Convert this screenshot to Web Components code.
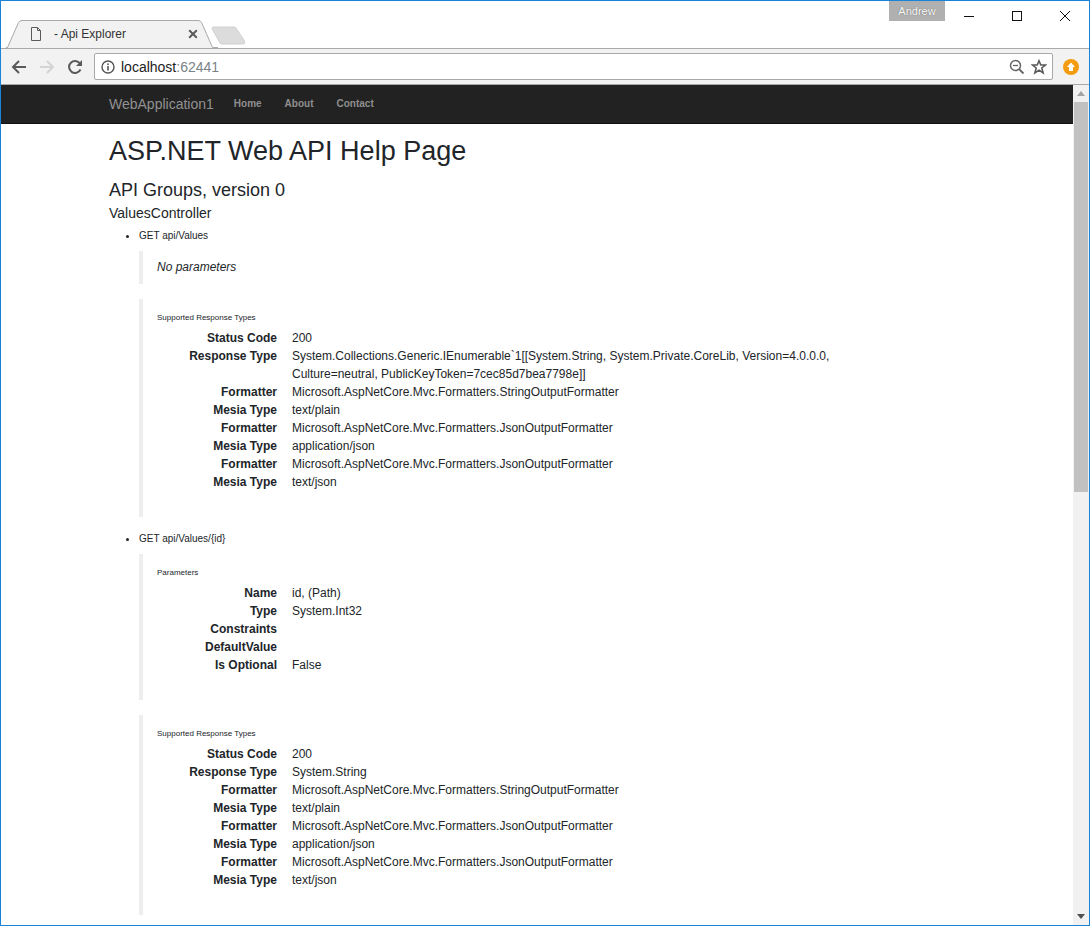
<!DOCTYPE html>
<html lang="en"><head><meta charset="utf-8"><title>Api Explorer</title>
<style>
html,body{margin:0;padding:0;background:#fff;font-family:"Liberation Sans",Arial,sans-serif;overflow:hidden}
</style></head><body>
<browser-window>
  <tab-strip slot="chrome"></tab-strip>
  <tool-bar slot="chrome"></tool-bar>
  <nav-bar slot="nav"></nav-bar>
  <help-page>
    <h-title>ASP.NET Web API Help Page</h-title>
    <group-title>API Groups, version 0</group-title>
    <controller-title>ValuesController</controller-title>
    <api-endpoint label="GET api/Values">
      <note-block compact><em>No parameters</em></note-block>
      <note-block heading="Supported Response Types" id="r1"></note-block>
    </api-endpoint>
    <api-endpoint label="GET api/Values/{id}">
      <note-block heading="Parameters" id="p2"></note-block>
      <note-block heading="Supported Response Types" id="r2"></note-block>
    </api-endpoint>
  </help-page>
  <scroll-bar slot="scroll"></scroll-bar>
</browser-window>
<script>
function def(name, css, html, init){
  customElements.define(name, class extends HTMLElement{
    constructor(){super();this.attachShadow({mode:'open'}).innerHTML='<style>'+css+'</style>'+html;}
    connectedCallback(){ if(init) init(this); }
  });
}
def('browser-window',`
:host{display:flex;flex-direction:column;box-sizing:border-box;width:1090px;height:926px;border:1px solid #1883d7;border-bottom-width:1px;overflow:hidden;background:#fff}
.body{display:flex;flex:1;min-height:0}
.main{flex:1;min-width:0;display:flex;flex-direction:column;overflow:hidden}
`,`<slot name="chrome"></slot><div class="body"><div class="main"><slot name="nav"></slot><slot></slot></div><slot name="scroll"></slot></div>`);

def('tab-strip',`
:host{display:flex;height:47px;background:#fff;position:relative;color:#222}
.tab{position:relative;margin-left:5px;width:207px;height:47px;flex:none;display:flex;align-items:center;box-sizing:border-box;padding:19px 0 0 24px}
.tab svg.shape{position:absolute;left:0;top:0}
.tab svg.doc,.tab span,.tab svg.x{position:relative}
.tab span{font-size:12px;margin-left:12px;width:124px;color:#333;white-space:pre}
.tab svg.x{margin-left:10px}
.new{margin:25px 0 0 -2px;flex:none}
.spacer{flex:1}
.user{width:56px;height:20px;background:#b0b0b0;color:#fff;font-size:11px;text-align:center;line-height:20px;flex:none;text-shadow:0 0 1px #555}
.ctl{display:flex;flex:none;width:144px;height:30px;margin-top:0;margin-right:0}
.ctl svg{width:48px;height:30px;display:block}
`,`<div class="tab">
<svg class="shape" width="212" height="47"><path d="M0 46.5H1.5L12.5 21.5Q13.5 19.5 16 19.5H192Q194.500 19.500 195.500 21.500L206.500 46.500H212V47H0Z" fill="#f2f2f2"/><path d="M-1 46.500H1.500L12.500 21.500Q13.500 19.500 16 19.500H192Q194.500 19.500 195.500 21.500L206.500 46.500H212" fill="none" stroke="#a9a9a9"/></svg>
<svg class="doc" width="12" height="14" viewBox="0 0 12 14"><path d="M1.500 .5H7.500L10.500 3.500V13.500H1.500ZM7.500 .5V3.500H10.500" fill="none" stroke="#5a5a5a"/></svg>
<span>- Api Explorer</span>
<svg class="x" width="10" height="10" viewBox="0 0 10 10"><path d="M1.200 1.200L8.800 8.800M8.800 1.200L1.200 8.800" stroke="#5a5a5a" stroke-width="2"/></svg>
</div>
<svg class="new" width="36" height="19" viewBox="0 0 36 19"><path d="M1 2.500Q1 1 2.500 1H23Q24.500 1 25 2L33.500 15Q34.500 18 32 18H11Q9.500 18 9 17Z" fill="#dcdcdc" stroke="#d0d0d0"/></svg>
<div class="spacer"></div>
<div class="user">Andrew</div>
<div class="ctl">
<svg viewBox="0 0 48 30"><path d="M19 15.500H29" stroke="#111"/></svg>
<svg viewBox="0 0 48 30"><rect x="19.500" y="10.500" width="9" height="9" fill="none" stroke="#111"/></svg>
<svg viewBox="0 0 48 30"><path d="M19 10L29 20M29 10L19 20" stroke="#111" fill="none"/></svg>
</div>`);

def('tool-bar',`
:host{display:flex;align-items:center;height:37px;box-sizing:border-box;background:#f2f2f2;border-bottom:1px solid #a8a8a8;border-top:1px solid #a9a9a9;padding:0}
.b{width:28px;height:28px;display:flex;align-items:center;justify-content:center;flex:none}
.first{margin-left:4px}
.omni{margin-left:5px;flex:none;width:959px;height:27px;box-sizing:border-box;background:#fff;border:1px solid #a9a9a9;border-radius:2px;display:flex;align-items:center;padding-left:6px}
.url{font-size:14px;margin-left:6px;color:#222;flex:1;white-space:pre}
.url i{font-style:normal;color:#7a8288}
.omni svg{flex:none}
.z{margin-right:6px}.s{margin-right:5px}
.ext{margin-left:10px;flex:none}
`,`<div class="b first"><svg width="16" height="16" viewBox="0 0 16 16"><path d="M15 8H2M8 2L2 8L8 14" fill="none" stroke="#5a5a5a" stroke-width="2"/></svg></div>
<div class="b"><svg width="16" height="16" viewBox="0 0 16 16"><path d="M1 8H14M8 2L14 8L8 14" fill="none" stroke="#d4d4d4" stroke-width="2"/></svg></div>
<div class="b"><svg width="16" height="16" viewBox="0 0 16 16"><path d="M13.500 10.500A6 6 0 1 1 13 4.500" fill="none" stroke="#5a5a5a" stroke-width="2"/><path d="M15 1V7H9Z" fill="#5a5a5a"/></svg></div>
<div class="omni">
<svg width="14" height="14" viewBox="0 0 14 14"><circle cx="7" cy="7" r="6" fill="none" stroke="#555" stroke-width="1.400"/><rect x="6.200" y="6" width="1.600" height="4.500" fill="#555"/><rect x="6.200" y="3.400" width="1.600" height="1.600" fill="#555"/></svg>
<div class="url">localhost<i>:62441</i></div>
<svg class="z" width="16" height="16" viewBox="0 0 16 16"><circle cx="6.500" cy="6.500" r="5" fill="none" stroke="#666" stroke-width="1.500"/><path d="M10 10L14.500 14.500" stroke="#666" stroke-width="1.800"/><path d="M4 6.500H9" stroke="#666" stroke-width="1.300"/></svg>
<svg class="s" width="16" height="16" viewBox="0 0 16 16"><path d="M8 1.800L9.800 6H14.500L10.800 9L12.100 13.800L8 11.100L3.900 13.800L5.200 9L1.500 6H6.200Z" fill="none" stroke="#5a5a5a" stroke-width="1.600"/></svg>
</div>
<svg class="ext" width="16" height="16" viewBox="0 0 16 16"><circle cx="8" cy="8" r="8" fill="#f39c12"/><path d="M8 3.500L12 8H10V12H6V8H4Z" fill="#fff"/></svg>`);

def('nav-bar',`
:host{display:flex;flex:none;align-items:center;height:39px;box-sizing:border-box;background:#222;border-bottom:1px solid #111;padding-left:108px;padding-bottom:1px}
.brand{font-size:14px;color:#919191;margin-right:20px}
a{font-size:10px;font-weight:bold;color:#8f8f8f;margin-right:23px;text-decoration:none}
`,`<span class="brand">WebApplication1</span><a>Home</a><a>About</a><a>Contact</a>`);

def('help-page',`
:host{display:block;padding:0 0 0 108px;color:#212529}
`,`<slot></slot>`);

def('h-title',`:host{display:block;font-size:27px;line-height:32px;margin-top:11px;font-weight:400;color:#212529}`,`<slot></slot>`);
def('group-title',`:host{display:block;font-size:18px;line-height:22px;margin-top:12px;color:#212529}`,`<slot></slot>`);
def('controller-title',`:host{display:block;font-size:14px;line-height:17px;margin-top:4px;color:#212529}`,`<slot></slot>`);

def('api-endpoint',`
:host{display:block;padding-left:30px}
.li{display:flex;align-items:center;font-size:10px;line-height:14px;height:14px;margin-top:7px;margin-bottom:8px;position:relative}
.li::before{content:"";width:3px;height:3px;border-radius:50%;background:#212529;margin-left:-13px;margin-right:10px}
`,`<div class="li"><span id="l"></span></div><slot></slot>`,el=>{el.shadowRoot.getElementById('l').textContent=el.getAttribute('label');});

const ROWS={
 r1:[['Status Code','200'],['Response Type','System.Collections.Generic.IEnumerable`1[[System.String, System.Private.CoreLib, Version=4.0.0.0, Culture=neutral, PublicKeyToken=7cec85d7bea7798e]]'],['Formatter','Microsoft.AspNetCore.Mvc.Formatters.StringOutputFormatter'],['Mesia Type','text/plain'],['Formatter','Microsoft.AspNetCore.Mvc.Formatters.JsonOutputFormatter'],['Mesia Type','application/json'],['Formatter','Microsoft.AspNetCore.Mvc.Formatters.JsonOutputFormatter'],['Mesia Type','text/json']],
 p2:[['Name','id, (Path)'],['Type','System.Int32'],['Constraints',''],['DefaultValue',''],['Is Optional','False']],
 r2:[['Status Code','200'],['Response Type','System.String'],['Formatter','Microsoft.AspNetCore.Mvc.Formatters.StringOutputFormatter'],['Mesia Type','text/plain'],['Formatter','Microsoft.AspNetCore.Mvc.Formatters.JsonOutputFormatter'],['Mesia Type','application/json'],['Formatter','Microsoft.AspNetCore.Mvc.Formatters.JsonOutputFormatter'],['Mesia Type','text/json']]
};
def('note-block',`
:host{display:block;border-left:4px solid #eee;padding:12px 0 26px 14px;margin-bottom:15px;width:742px;box-sizing:content-box}
:host([compact]){padding:8px 0 8px 14px;font-size:12px;line-height:17px}
h6{margin:0 0 5px;font-size:8px;line-height:13px;font-weight:400}
.g{display:grid;grid-template-columns:120px 1fr;column-gap:15px;font-size:12px;line-height:18px}
dt{font-weight:bold;text-align:right;margin:0}dd{margin:0}
::slotted(em){font-style:italic}
`,`<h6 id="h"></h6><dl class="g" id="g" style="margin:0"></dl><slot></slot>`,el=>{
  const s=el.shadowRoot, h=s.getElementById('h'), g=s.getElementById('g');
  const t=el.getAttribute('heading');
  if(!t){h.remove();g.remove();return;}
  h.textContent=t;
  (ROWS[el.id]||[]).forEach(([a,b])=>{const d=document.createElement('dt');d.textContent=a;const e=document.createElement('dd');e.textContent=b;g.append(d,e);});
});

def('scroll-bar',`
:host{display:flex;flex-direction:column;align-items:center;flex:none;width:16px;background:#f1f1f1}
.a{height:17px;display:flex;align-items:center;justify-content:center;flex:none}
.thumb{width:14px;height:390px;background:#c1c1c1;flex:none}
.sp{flex:1}
`,`<div class="a"><svg width="8" height="5"><path d="M4 0L8 5H0Z" fill="#a3a3a3"/></svg></div><div class="thumb"></div><div class="sp"></div><div class="a"><svg width="8" height="5"><path d="M4 5L8 0H0Z" fill="#505050"/></svg></div>`);
</script>
</body></html>
